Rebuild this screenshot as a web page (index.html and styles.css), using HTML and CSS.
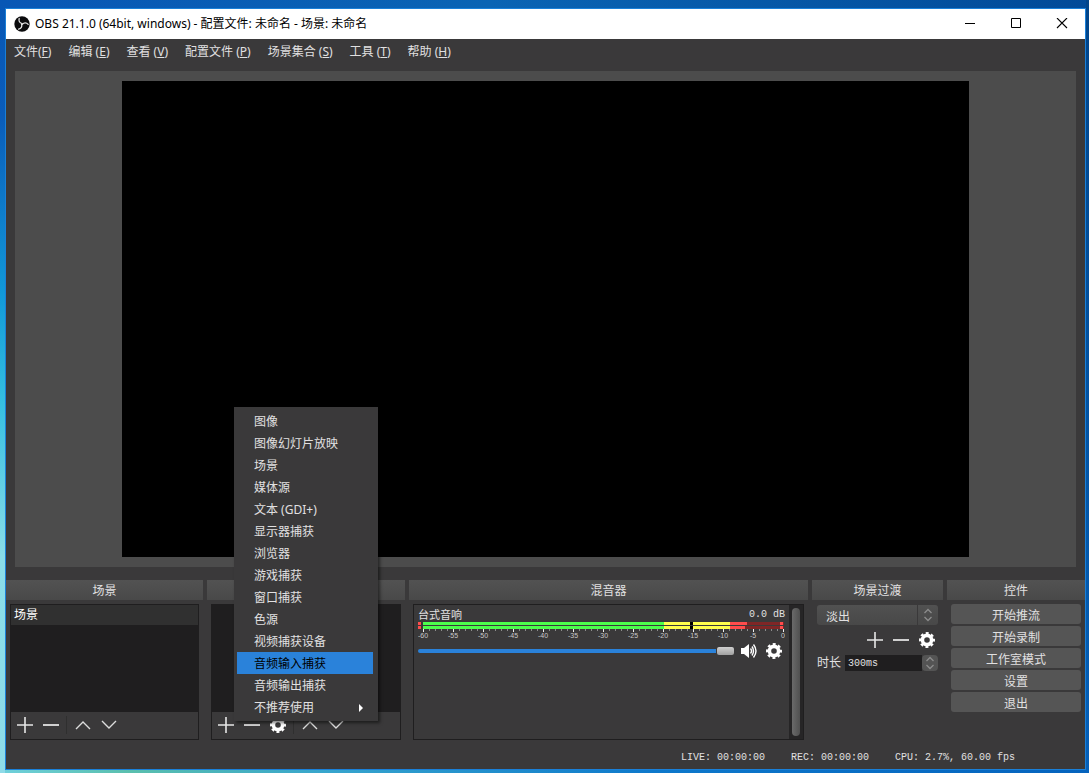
FILE: index.html
```html
<!DOCTYPE html>
<html lang="zh-CN">
<head>
<meta charset="utf-8">
<title>OBS 21.1.0</title>
<link rel="stylesheet" href="styles.css">
</head>
<body>
<svg class="defs" aria-hidden="true">
  <symbol id="plus" viewBox="0 0 16 16"><path d="M0 8H16M8 0V16" stroke="#e6e6e6" stroke-width="1.6"/></symbol>
  <symbol id="minus" viewBox="0 0 16 16"><path d="M0 8H16" stroke="#d0d0d0" stroke-width="2"/></symbol>
  <symbol id="up" viewBox="0 0 16 16"><path d="M1 12L8 5L15 12" fill="none" stroke="#dcdcdc" stroke-width="1.4"/></symbol>
  <symbol id="down" viewBox="0 0 16 16"><path d="M1 4L8 11L15 4" fill="none" stroke="#dcdcdc" stroke-width="1.4"/></symbol>
  <symbol id="gear" viewBox="0 0 16 16"><g fill="none" stroke="#fff"><circle cx="8" cy="8" r="4.6" stroke-width="3.6"/><circle cx="8" cy="8" r="6.8" stroke-width="2.4" stroke-dasharray="2.9 2.44" stroke-dashoffset="1.45"/></g></symbol>
  <symbol id="spin" viewBox="0 0 16 16"><path d="M4.500 6L8 2.500L11.500 6M4.500 10L8 13.500L11.500 10" fill="none" stroke="#8c8c8c" stroke-width="1.3"/></symbol>
</svg>
<div class="window">
  <header class="titlebar">
    <svg class="logo" viewBox="0 0 16 16"><circle cx="8" cy="8" r="7.700" fill="#0b0b0d"/><g fill="none" stroke="#e4e4e4" stroke-width="1.300" stroke-linecap="round"><path d="M8.200 7.600C5.600 7 4.400 5 5.200 2.500"/><path d="M8.200 7.600C5.600 7 4.400 5 5.200 2.500" transform="rotate(120 8 8)"/><path d="M8.200 7.600C5.600 7 4.400 5 5.200 2.500" transform="rotate(240 8 8)"/></g></svg>
    <h1 class="title">OBS 21.1.0 (64bit, windows) - 配置文件: 未命名 - 场景: 未命名</h1>
    <button class="caption" aria-label="最小化"><svg viewBox="0 0 12 12"><path d="M1 5.500H11" stroke="#000"/></svg></button>
    <button class="caption" aria-label="最大化"><svg viewBox="0 0 12 12"><path d="M1.500 0.500H10.500V9.500H1.500Z" fill="none" stroke="#000"/></svg></button>
    <button class="caption" aria-label="关闭"><svg viewBox="0 0 12 12"><path d="M1 0L11 10M11 0L1 10" stroke="#000" stroke-width="1.100"/></svg></button>
  </header>
  <nav class="menubar">
    <button>文件(<u>F</u>)</button>
    <button>编辑 (<u>E</u>)</button>
    <button>查看 (<u>V</u>)</button>
    <button>配置文件 (<u>P</u>)</button>
    <button>场景集合 (<u>S</u>)</button>
    <button>工具 (<u>T</u>)</button>
    <button>帮助 (<u>H</u>)</button>
  </nav>
  <main class="preview"><div class="canvas"></div></main>
  <section class="docks">
    <section class="dock">
      <h2>场景</h2>
      <div class="frame">
        <ul class="list"><li class="selected">场景</li></ul>
        <div class="toolbar">
          <button aria-label="添加场景"><svg><use href="#plus"/></svg></button>
          <button aria-label="删除场景"><svg><use href="#minus"/></svg></button>
          <span class="separator"></span>
          <button aria-label="上移场景"><svg><use href="#up"/></svg></button>
          <button aria-label="下移场景"><svg><use href="#down"/></svg></button>
        </div>
      </div>
    </section>
    <section class="dock">
      <h2 aria-label="来源"></h2>
      <div class="frame">
        <ul class="list"></ul>
        <div class="toolbar">
          <button aria-label="添加来源"><svg><use href="#plus"/></svg></button>
          <button aria-label="删除来源"><svg><use href="#minus"/></svg></button>
          <button aria-label="来源设置"><svg><use href="#gear"/></svg></button>
          <span class="separator"></span>
          <button aria-label="上移来源"><svg><use href="#up"/></svg></button>
          <button aria-label="下移来源"><svg><use href="#down"/></svg></button>
        </div>
      </div>
      <div class="popup" role="menu">
        <button role="menuitem">图像</button>
        <button role="menuitem">图像幻灯片放映</button>
        <button role="menuitem">场景</button>
        <button role="menuitem">媒体源</button>
        <button role="menuitem">文本 (GDI+)</button>
        <button role="menuitem">显示器捕获</button>
        <button role="menuitem">浏览器</button>
        <button role="menuitem">游戏捕获</button>
        <button role="menuitem">窗口捕获</button>
        <button role="menuitem">色源</button>
        <button role="menuitem">视频捕获设备</button>
        <button role="menuitem" class="active">音频输入捕获</button>
        <button role="menuitem">音频输出捕获</button>
        <button role="menuitem">不推荐使用<svg viewBox="0 0 4 8"><path d="M0 0L4 4L0 8Z" fill="#fff"/></svg></button>
      </div>
    </section>
    <section class="dock">
      <h2>混音器</h2>
      <div class="frame mixer">
        <div class="channel">
          <div class="names"><label for="volume">台式音响</label><output class="mono">0.0 dB</output></div>
          <svg class="meter" viewBox="0 0 367 19">
            <g shape-rendering="crispEdges">
              <path d="M0 0h3v3h-3zM0 4h3v3h-3z" fill="#ff4c4c"/>
              <path d="M5 0h241v3h-241zM5 4h241v3h-241z" fill="#4cff4c"/>
              <path d="M246 0h66v3h-66zM246 4h66v3h-66z" fill="#ffff4c"/>
              <path d="M312 0h54v3h-54zM312 4h54v3h-54z" fill="#7f2626"/>
              <path d="M312 0h17v3h-17zM312 4h15v3h-15zM362 0h3v3h-3zM362 4h3v3h-3z" fill="#ff4c4c"/>
              <path d="M272 0h3v3h-3zM272 4h3v3h-3z" fill="#000"/>
              <path d="M5 8H366" stroke="#8c8c8c" stroke-width="2" stroke-dasharray="1 5"/>
              <path d="M5 8.500H366" stroke="#eee" stroke-width="3" stroke-dasharray="1 29"/>
            </g>
            <g class="scale">
              <text x="5" y="16">-60</text><text x="35" y="16">-55</text><text x="65" y="16">-50</text><text x="95" y="16">-45</text><text x="125" y="16">-40</text><text x="155" y="16">-35</text><text x="185" y="16">-30</text><text x="215" y="16">-25</text><text x="245" y="16">-20</text><text x="275" y="16">-15</text><text x="305" y="16">-10</text><text x="335" y="16">-5</text><text x="365" y="16">0</text>
            </g>
          </svg>
          <div class="fader">
            <input id="volume" type="range" min="0" max="100" value="100">
            <button aria-label="静音"><svg viewBox="0 0 16 16"><path d="M0 5H3L8 1V15L3 11H0Z" fill="#fff"/><path d="M9.500 5.500Q11.500 8 9.500 10.500M11 3.500Q14 8 11 12.500M12.500 1.500Q17.500 8 12.500 14.500" fill="none" stroke="#fff" stroke-width="1.400"/></svg></button>
            <button aria-label="音频设置"><svg><use href="#gear"/></svg></button>
          </div>
        </div>
        <div class="scrollbar"><span></span></div>
      </div>
    </section>
    <section class="dock">
      <h2>场景过渡</h2>
      <div class="transitions">
        <div class="combo">
          <select aria-label="场景过渡"><option>淡出</option></select>
          <svg><use href="#spin"/></svg>
        </div>
        <div class="actions">
          <button aria-label="添加过渡"><svg><use href="#plus"/></svg></button>
          <button aria-label="删除过渡"><svg><use href="#minus"/></svg></button>
          <button aria-label="过渡设置"><svg><use href="#gear"/></svg></button>
        </div>
        <div class="duration">
          <label for="duration">时长</label>
          <input id="duration" class="mono" type="text" value="300ms">
          <button aria-label="调整时长"><svg><use href="#spin"/></svg></button>
        </div>
      </div>
    </section>
    <section class="dock">
      <h2>控件</h2>
      <div class="controls">
        <button>开始推流</button>
        <button>开始录制</button>
        <button>工作室模式</button>
        <button>设置</button>
        <button>退出</button>
      </div>
    </section>
  </section>
  <footer class="status mono">
    <span>LIVE: 00:00:00</span>
    <span>REC: 00:00:00</span>
    <span>CPU: 2.7%, 60.00 fps</span>
  </footer>
</div>
</body>
</html>
```
FILE: styles.css
```css
* {
  box-sizing: border-box;
}

body {
  margin: 0;
  min-height: 100vh;
  display: flex;
  padding: 8px 3px 3px 5px;
  font: 12px/20px "Noto Sans", "Noto Sans CJK SC", sans-serif;
  color: #e1e0e1;
  background:
    linear-gradient(#0857b5, #0a5cba 15%, #1199d8 38%, #35bfe0 52%, #8adde8 72%, #8edbe8) left / 5px 100% no-repeat,
    linear-gradient(90deg, #6fd0dc, #5abfae 12%, #37a5cd 30%, #0d78cb 60%, #0563bd) bottom / 100% 3px no-repeat,
    linear-gradient(#014488, #0560b8) right / 3px 100% no-repeat,
    linear-gradient(90deg, #0857b5, #0a64b4 45%, #014a98);
}

button,
input,
select {
  margin: 0;
  padding: 0;
  border: 0;
  background: none;
  color: inherit;
  font: inherit;
}

svg {
  display: block;
  width: 16px;
  height: 16px;
}

.defs {
  position: absolute;
  width: 0;
  height: 0;
}

.mono {
  font-family: "Liberation Mono", "Noto Sans CJK SC", monospace;
  font-size: 10px;
}

.window {
  flex: 1;
  display: flex;
  flex-direction: column;
  min-width: 0;
  border: 1px solid #1a80d8;
  background: #3a393a;
}

.titlebar {
  display: flex;
  align-items: center;
  height: 30px;
  padding-left: 8px;
  background: #fff;
  color: #000;
}

.title {
  flex: 1;
  margin: 0 0 0 5px;
  font-size: 12px;
  font-weight: normal;
}

.caption {
  display: grid;
  place-items: center;
  width: 46px;
  height: 30px;
}

.caption svg {
  width: 12px;
  height: 12px;
}

.menubar {
  display: flex;
  gap: 17px;
  padding: 3px 8px 1px;
}

.preview {
  flex: 1;
  display: flex;
  justify-content: center;
  margin: 8px 9px 13px;
  padding: 10px;
  background: #4c4c4c;
}

.canvas {
  aspect-ratio: 16 / 9;
  background: #000;
}

.docks {
  display: grid;
  grid-template-columns: 197fr 198fr 399fr 131fr 138fr;
  gap: 4px;
}

.dock {
  position: relative;
  min-width: 0;
}

.dock h2 {
  height: 20px;
  margin: 0 0 4px;
  background: linear-gradient(#525252, #494949);
  font-size: 12px;
  font-weight: normal;
  line-height: 22px;
  text-align: center;
}

.frame {
  display: flex;
  flex-direction: column;
  height: 136px;
  margin: 0 4px;
  border: 1px solid #1f1e1f;
}

.list {
  flex: 1;
  margin: 0;
  padding: 0;
  list-style: none;
  background: #1f1e1f;
}

.selected {
  padding-left: 3px;
  background: #303030;
  color: #fff;
}

.toolbar {
  display: flex;
  align-items: center;
  gap: 10px;
  height: 27px;
  padding: 0 0 2px 6px;
}

.separator {
  width: 1px;
  height: 18px;
  margin: 0 -2px 0 -3px;
  background: #2f2f2f;
}

.popup {
  position: absolute;
  left: 27px;
  bottom: 19px;
  width: 144px;
  padding: 3px 5px 3px 3px;
  background: #3a393a;
  box-shadow: 2px 2px 3px rgba(0, 0, 0, 0.5);
}

.popup button {
  display: flex;
  align-items: center;
  justify-content: space-between;
  width: 100%;
  height: 22px;
  padding: 2px 10px 0 17px;
}

.popup .active {
  background: #2a82da;
  color: #000;
}

.popup svg {
  width: 4px;
  height: 8px;
}

.mixer {
  flex-direction: row;
}

.channel {
  flex: 1;
  min-width: 0;
  padding: 0 4px;
}

.names {
  display: flex;
  justify-content: space-between;
  height: 17px;
  font-size: 11px;
}

.meter {
  width: 100%;
  height: auto;
}

.scale {
  fill: #c8c8c8;
  font: 7px "Liberation Sans", sans-serif;
  text-anchor: middle;
}

.fader {
  display: flex;
  align-items: center;
  gap: 9px;
  height: 20px;
  padding-right: 3px;
}

.fader input {
  flex: 1;
  min-width: 0;
  height: 16px;
  margin-right: -3px;
  appearance: none;
}

.fader input::-webkit-slider-runnable-track {
  height: 4px;
  border-radius: 2px;
  background: #2a82da;
}

.fader input::-webkit-slider-thumb {
  appearance: none;
  width: 19px;
  height: 10px;
  margin-top: -3px;
  border: 1px solid #3a393a;
  border-radius: 3px;
  background: linear-gradient(#d0d0d0, #a0a0a0);
}

.scrollbar {
  width: 14px;
  padding: 3px;
  background: #262526;
}

.scrollbar span {
  display: block;
  width: 8px;
  height: 100%;
  border-radius: 4px;
  background: linear-gradient(90deg, #6a6a6a, #505050);
}

.transitions {
  padding: 1px 5px;
}

.combo {
  display: flex;
  align-items: center;
  height: 20px;
  border-radius: 3px;
  background: linear-gradient(#515151, #484848);
}

.combo select {
  flex: 1;
  height: 20px;
  padding: 2px 0 0 9px;
  border-right: 1px solid #3a393a;
  appearance: none;
}

.combo svg {
  margin: 0 2px;
}

.actions {
  display: flex;
  justify-content: flex-end;
  gap: 10px;
  padding: 7px 3px;
}

.duration {
  display: flex;
  align-items: center;
  height: 16px;
}

.duration label {
  margin-right: 4px;
}

.duration input {
  flex: 1;
  min-width: 0;
  height: 16px;
  padding: 2px 0 0 3px;
  background: #1f1e1f;
}

.duration button {
  border-radius: 4px;
  background: #545454;
}

.controls {
  display: flex;
  flex-direction: column;
  gap: 2px;
  padding: 0 4px;
}

.controls button {
  height: 20px;
  padding-top: 2px;
  border-radius: 3px;
  background: #555;
}

.status {
  display: flex;
  justify-content: flex-end;
  gap: 26px;
  padding: 8px 70px 1px 0;
}
```
